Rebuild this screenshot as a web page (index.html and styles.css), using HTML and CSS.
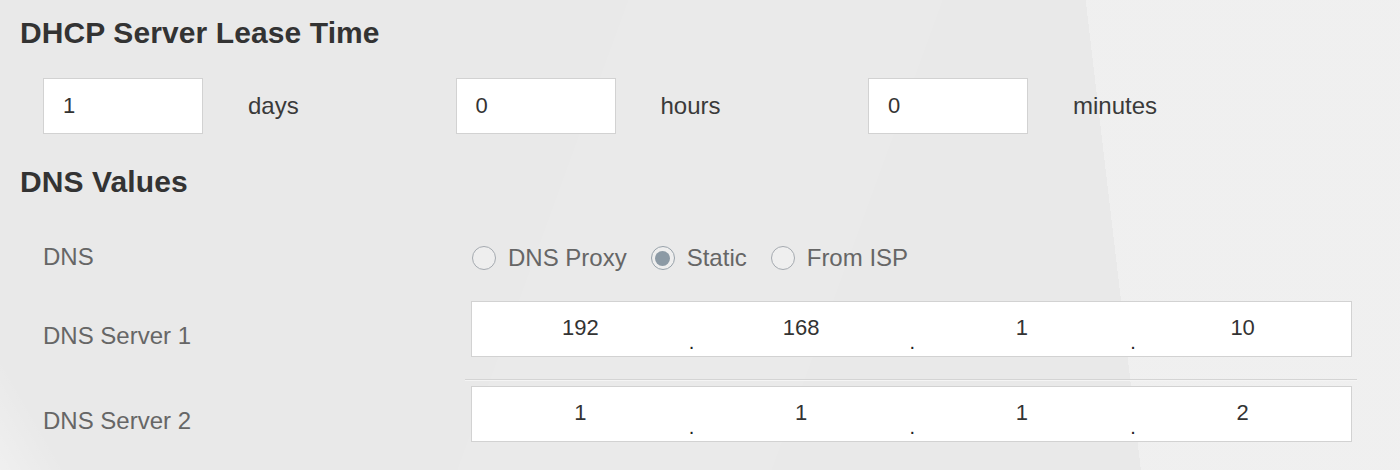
FILE: index.html
```html
<!DOCTYPE html>
<html lang="en">
<head>
<meta charset="utf-8">
<title>DHCP Settings</title>
<link rel="stylesheet" href="styles.css">
</head>
<body>
<div class="page">
  <h2 class="section-title">DHCP Server Lease Time</h2>
  <div class="lease-row">
    <div class="lease-group">
      <div class="text-box">1</div>
      <span class="unit">days</span>
    </div>
    <div class="lease-group">
      <div class="text-box">0</div>
      <span class="unit">hours</span>
    </div>
    <div class="lease-group">
      <div class="text-box">0</div>
      <span class="unit">minutes</span>
    </div>
  </div>

  <h2 class="section-title dns-title">DNS Values</h2>
  <div class="form">
    <div class="form-row radio-row">
      <div class="row-label">DNS</div>
      <div class="radio-group">
        <label class="radio"><span class="radio-circle"></span><span class="radio-text">DNS Proxy</span></label>
        <label class="radio"><span class="radio-circle checked"></span><span class="radio-text">Static</span></label>
        <label class="radio"><span class="radio-circle"></span><span class="radio-text">From ISP</span></label>
      </div>
    </div>
    <div class="form-row ip-row">
      <div class="row-label ip-label">DNS Server 1</div>
      <div class="ip-box">
        <span class="octet">192</span><span class="dot">.</span><span class="octet">168</span><span class="dot">.</span><span class="octet">1</span><span class="dot">.</span><span class="octet">10</span>
      </div>
    </div>
    <div class="separator-row">
      <div></div>
      <div class="separator"></div>
    </div>
    <div class="form-row ip-row">
      <div class="row-label ip-label">DNS Server 2</div>
      <div class="ip-box">
        <span class="octet">1</span><span class="dot">.</span><span class="octet">1</span><span class="dot">.</span><span class="octet">1</span><span class="dot">.</span><span class="octet">2</span>
      </div>
    </div>
  </div>
</div>
</body>
</html>
```

FILE: styles.css
```css
html, body {
  margin: 0;
  padding: 0;
}

body {
  font-family: "Liberation Sans", Arial, Helvetica, sans-serif;
  color: #333333;
}

.page {
  box-sizing: border-box;
  height: 470px;
  padding: 15px 20px 0 20px;
  background-color: #e9e9e9;
  background-image:
    linear-gradient(83.3deg, rgba(255,255,255,0) 78.4%, rgba(255,255,255,0.3) 78.4%),
    linear-gradient(60deg, rgba(255,255,255,0.3) 0%, rgba(255,255,255,0) 4%),
    linear-gradient(110deg, rgba(255,255,255,0) 40%, rgba(255,255,255,0.06) 40%, rgba(255,255,255,0.06) 60%, rgba(255,255,255,0) 60%);
  overflow: hidden;
}

.section-title {
  margin: 0;
  font-size: 30px;
  line-height: 36px;
  font-weight: bold;
  color: #333333;
  letter-spacing: 0.1px;
}

.dns-title {
  margin-top: 30px;
}

.lease-row {
  display: grid;
  grid-template-columns: repeat(3, 412.5px);
  margin-top: 27px;
  padding-left: 23px;
}

.lease-group {
  display: flex;
  align-items: center;
  gap: 45px;
}

.text-box {
  box-sizing: border-box;
  width: 160px;
  height: 56px;
  padding-left: 19px;
  background: #ffffff;
  border: 1px solid #d2d2d2;
  font-size: 22px;
  line-height: 54px;
  color: #333333;
}

.unit {
  font-size: 24px;
  color: #3a3a3a;
}

.form {
  margin-top: 30px;
  padding-left: 23px;
}

.form-row,
.separator-row {
  display: grid;
  grid-template-columns: 428px 881px;
}

.radio-row {
  height: 56px;
  align-items: center;
}

.row-label {
  font-size: 24px;
  line-height: 28px;
  color: #666666;
}

.radio-row .row-label {
  margin-top: -2px;
}

.ip-row {
  height: 56px;
}

.radio-row + .ip-row {
  margin-top: 15px;
}

.ip-label {
  padding-top: 21px;
}

.radio-group {
  display: flex;
  align-items: center;
  gap: 24px;
  padding-left: 1px;
}

.radio {
  display: flex;
  align-items: center;
  gap: 12px;
}

.radio-circle {
  box-sizing: border-box;
  width: 24px;
  height: 24px;
  border-radius: 50%;
  border: 1px solid #a5aab0;
  background: rgba(255, 255, 255, 0.25);
  display: flex;
  align-items: center;
  justify-content: center;
}

.radio-circle.checked {
  border-color: #98a2aa;
  background: #eeeeee;
}

.radio-circle.checked::after {
  content: "";
  width: 15px;
  height: 15px;
  border-radius: 50%;
  background: #8c9aa5;
}

.radio-text {
  font-size: 24px;
  line-height: 28px;
  color: #666666;
}

.ip-box {
  box-sizing: border-box;
  height: 56px;
  display: flex;
  background: #ffffff;
  border: 1px solid #d2d2d2;
}

.octet {
  flex: 1;
  text-align: center;
  font-size: 22px;
  line-height: 52px;
  color: #333333;
}

.dot {
  width: 4px;
  font-size: 20px;
  line-height: 20px;
  align-self: flex-end;
  margin-bottom: 4px;
  color: #222222;
  text-align: center;
}

.separator-row {
  margin-top: 22px;
  margin-bottom: 5px;
}

.separator {
  height: 1px;
  margin-left: -6px;
  margin-right: -5px;
  background: #d4d4d4;
  border-bottom: 1px solid #f4f4f4;
}
```
